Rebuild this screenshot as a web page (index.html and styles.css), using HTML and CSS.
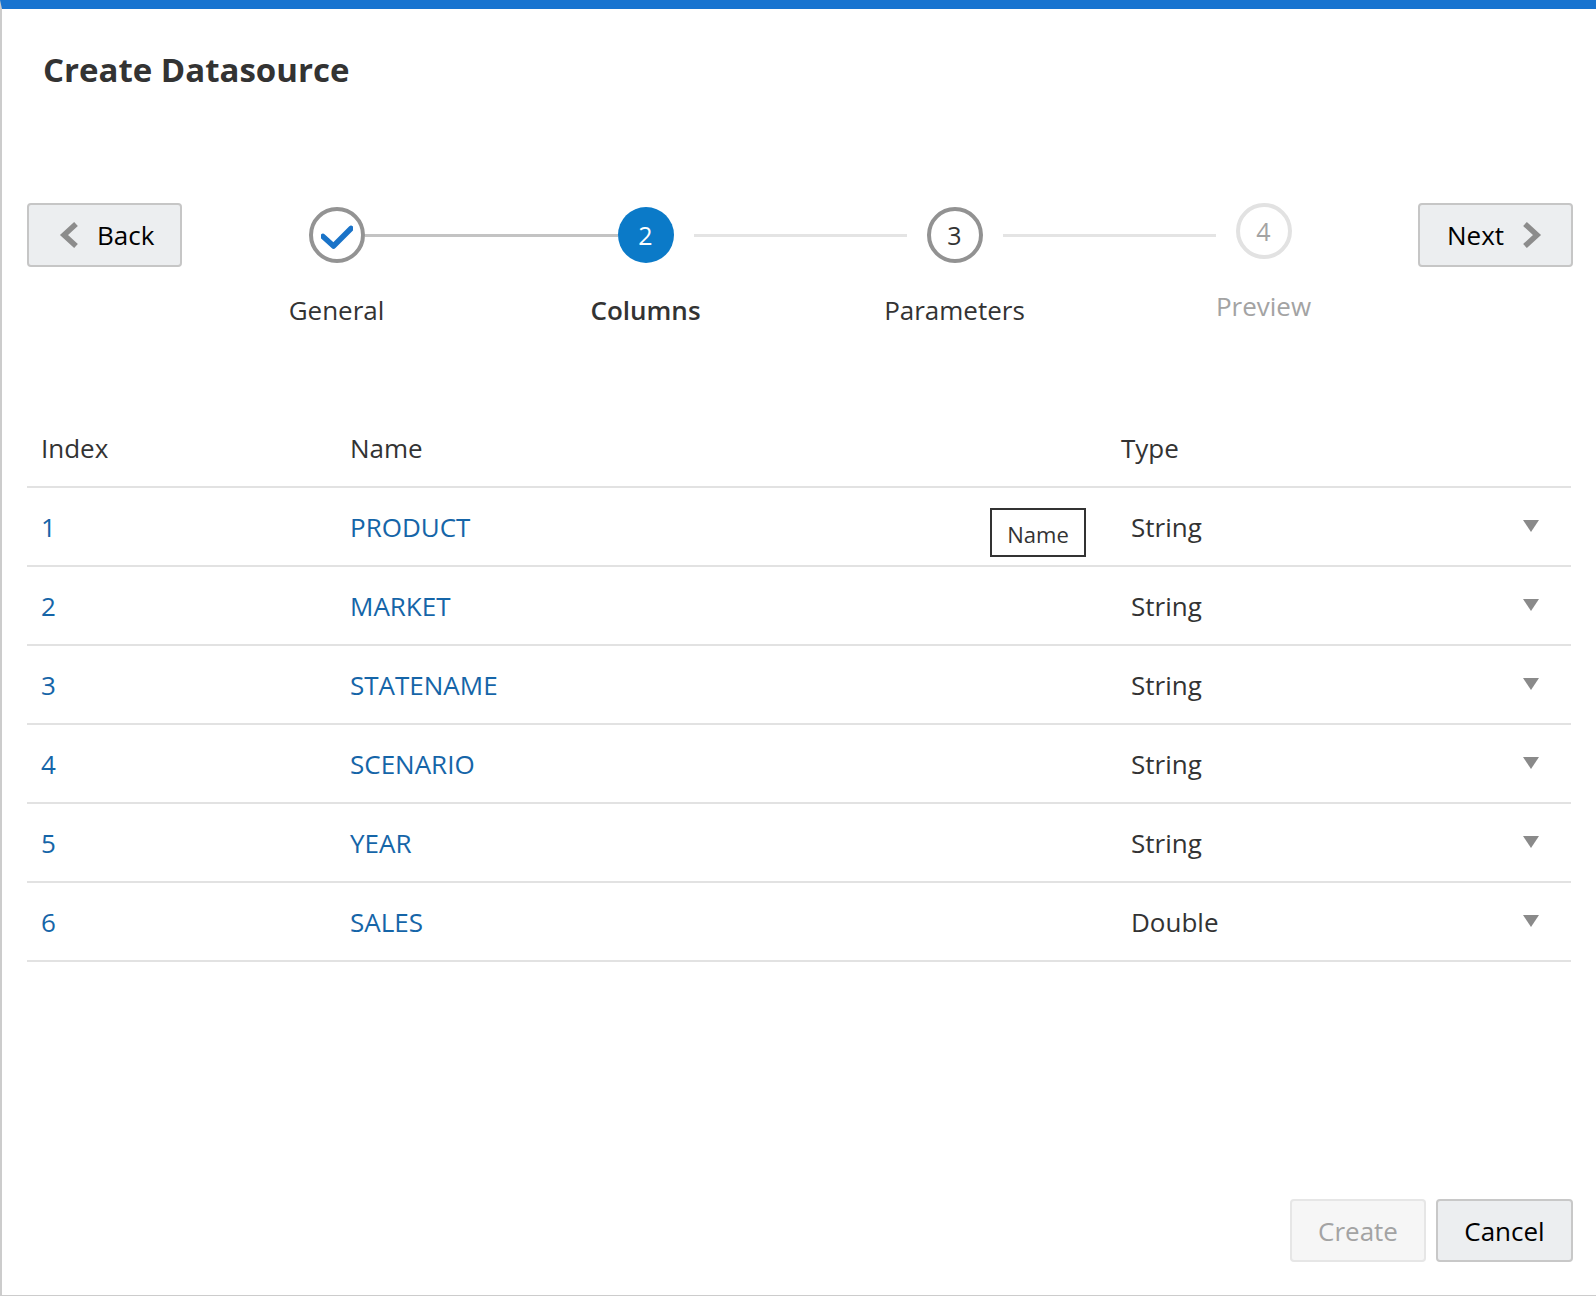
FILE: index.html
```html
<!DOCTYPE html>
<html lang="en">
<head>
<meta charset="utf-8">
<title>Create Datasource</title>
<link rel="stylesheet" href="styles.css">
</head>
<body>
<div class="dialog">
  <h1 class="title">Create Datasource</h1>

  <div class="train-row">
    <button class="nav-btn back-btn" type="button">
      <svg class="chev" width="20" height="28" viewBox="0 0 20 28"><polyline points="17,3 5,14 17,25" /></svg>
      <span>Back</span>
    </button>

    <div class="steps">
      <div class="step">
        <div class="step-track">
          <span class="seg none"></span>
          <span class="circle done">
            <svg class="check" width="32" height="24" viewBox="0 0 32 24"><polyline points="2,11.5 12.5,21 30,3.5" /></svg>
          </span>
          <span class="seg done-line"></span>
        </div>
        <div class="label">General</div>
      </div>
      <div class="step">
        <div class="step-track">
          <span class="seg done-line"></span>
          <span class="circle current">2</span>
          <span class="seg todo right"></span>
        </div>
        <div class="label current-label">Columns</div>
      </div>
      <div class="step">
        <div class="step-track">
          <span class="seg todo left"></span>
          <span class="circle open">3</span>
          <span class="seg todo right"></span>
        </div>
        <div class="label">Parameters</div>
      </div>
      <div class="step">
        <div class="step-track">
          <span class="seg todo left"></span>
          <span class="circle disabled raised">4</span>
          <span class="seg none"></span>
        </div>
        <div class="label disabled-label raised">Preview</div>
      </div>
    </div>

    <button class="nav-btn next-btn" type="button">
      <span>Next</span>
      <svg class="chev" width="20" height="28" viewBox="0 0 20 28"><polyline points="3,3 15,14 3,25" /></svg>
    </button>
  </div>

  <div class="table">
    <div class="thead">
      <div class="cell c-index">Index</div>
      <div class="cell c-name">Name</div>
      <div class="cell c-type">Type</div>
    </div>

    <div class="trow">
      <div class="cell c-index link">1</div>
      <div class="cell c-name link">PRODUCT<span class="tooltip">Name</span></div>
      <div class="cell c-type"><span class="select"><span>String</span><span class="arrow"></span></span></div>
    </div>
    <div class="trow">
      <div class="cell c-index link">2</div>
      <div class="cell c-name link">MARKET</div>
      <div class="cell c-type"><span class="select"><span>String</span><span class="arrow"></span></span></div>
    </div>
    <div class="trow">
      <div class="cell c-index link">3</div>
      <div class="cell c-name link">STATENAME</div>
      <div class="cell c-type"><span class="select"><span>String</span><span class="arrow"></span></span></div>
    </div>
    <div class="trow">
      <div class="cell c-index link">4</div>
      <div class="cell c-name link">SCENARIO</div>
      <div class="cell c-type"><span class="select"><span>String</span><span class="arrow"></span></span></div>
    </div>
    <div class="trow">
      <div class="cell c-index link">5</div>
      <div class="cell c-name link">YEAR</div>
      <div class="cell c-type"><span class="select"><span>String</span><span class="arrow"></span></span></div>
    </div>
    <div class="trow">
      <div class="cell c-index link">6</div>
      <div class="cell c-name link">SALES</div>
      <div class="cell c-type"><span class="select"><span>Double</span><span class="arrow"></span></span></div>
    </div>
  </div>

  <div class="footer">
    <button class="foot-btn create" type="button" disabled>Create</button>
    <button class="foot-btn cancel" type="button">Cancel</button>
  </div>
</div>
</body>
</html>
```

FILE: styles.css
```css
* {
  box-sizing: border-box;
}

html, body {
  margin: 0;
  padding: 0;
  background: #ffffff;
}

body {
  font-family: "Open Sans", "Noto Sans", "Liberation Sans", sans-serif;
  color: #333333;
}

.dialog {
  height: 1296px;
  width: 1596px;
  border-top: 9px solid #1874d0;
  border-left: 2px solid #cccccc;
  border-bottom: 1px solid #cccccc;
  display: flex;
  flex-direction: column;
  background: #ffffff;
}

.title {
  margin: 41px 0 0 0;
  padding-left: 41px;
  font-size: 33px;
  line-height: 40px;
  font-weight: 700;
  color: #333333;
}

/* ---------- train ---------- */
.train-row {
  margin-top: 113px;
  padding-left: 25px;
  display: flex;
  align-items: flex-start;
}

.nav-btn {
  width: 155px;
  height: 64px;
  border: 2px solid #c6c6c6;
  border-radius: 4px;
  background: #eceef0;
  display: flex;
  align-items: center;
  font-family: inherit;
  font-size: 26px;
  color: #000000;
  padding: 0;
  cursor: pointer;
}

.back-btn {
  padding-left: 30px;
  gap: 18px;
}

.next-btn {
  padding-left: 27px;
  gap: 18px;
}

.nav-btn span {
  line-height: 36px;
}

.chev {
  display: block;
  flex: none;
}

.chev polyline {
  fill: none;
  stroke: #8c8c8c;
  stroke-width: 5.5;
  stroke-linejoin: miter;
}

.steps {
  display: flex;
}

.step {
  width: 309px;
  padding-top: 4px;
  display: flex;
  flex-direction: column;
  align-items: center;
}

.step-track {
  width: 100%;
  display: flex;
  align-items: center;
}

.seg {
  flex: 1 1 0;
  display: flex;
  min-width: 0;
}

.seg::before {
  content: "";
  flex: 1;
  height: 3px;
}

.seg.none::before {
  background: transparent;
}

.seg.done-line::before {
  background: #c3c3c3;
}

.seg.todo::before {
  background: #e4e4e4;
}

.seg.todo.right::before {
  margin-left: 20px;
}

.seg.todo.left::before {
  margin-right: 20px;
}

.circle {
  flex: none;
  width: 56px;
  height: 56px;
  border-radius: 50%;
  display: flex;
  align-items: center;
  justify-content: center;
  font-size: 25px;
  line-height: 1;
}

.circle.done {
  border: 4px solid #939393;
  background: #ffffff;
}

.check {
  display: block;
  margin-top: 4px;
}

.check polyline {
  fill: none;
  stroke: #1a73c8;
  stroke-width: 5.5;
  stroke-linecap: round;
  stroke-linejoin: round;
}

.circle.current {
  background: #0b7ac8;
  color: #ffffff;
}

.circle.open {
  border: 4px solid #929292;
  color: #333333;
}

.circle.disabled {
  border: 4px solid #e2e2e2;
  color: #a3a3a3;
}

.raised {
  transform: translateY(-4px);
}

.label {
  margin-top: 29px;
  font-size: 26px;
  line-height: 36px;
  color: #333333;
  white-space: nowrap;
}

.label.current-label {
  font-weight: 600;
}

.label.disabled-label {
  color: #a3a3a3;
}

/* ---------- table ---------- */
.table {
  margin-top: 102px;
  margin-left: 25px;
  width: 1544px;
}

.thead,
.trow {
  display: grid;
  grid-template-columns: 323px 771px 450px;
  border-bottom: 2px solid #e2e2e2;
}

.thead .cell {
  font-size: 26px;
  line-height: 36px;
  padding-bottom: 20px;
  color: #333333;
}

.trow {
  height: 79px;
  align-items: center;
}

.trow .cell {
  font-size: 26px;
  line-height: 36px;
}

.c-index {
  padding-left: 14px;
}

.c-name {
  position: relative;
  height: 100%;
  display: flex;
  align-items: center;
}

.thead .c-name {
  display: block;
}

.link {
  color: #1565a8;
}

.select {
  display: flex;
  align-items: center;
  justify-content: space-between;
  padding-left: 10px;
  padding-right: 32px;
  color: #333333;
}

.arrow {
  width: 0;
  height: 0;
  border-left: 8.5px solid transparent;
  border-right: 8.5px solid transparent;
  border-top: 12px solid #8a8a8a;
  margin-top: -2px;
}

.tooltip {
  position: absolute;
  right: 35px;
  top: 20px;
  width: 96px;
  height: 49px;
  border: 2px solid #333333;
  background: #ffffff;
  color: #333333;
  font-size: 22px;
  line-height: 30px;
  display: flex;
  align-items: center;
  justify-content: center;
  padding-top: 3px;
}

/* ---------- footer ---------- */
.footer {
  margin-top: auto;
  padding: 0 23px 33px 0;
  display: flex;
  justify-content: flex-end;
  gap: 10px;
}

.foot-btn {
  height: 63px;
  border-radius: 4px;
  font-family: inherit;
  font-size: 26px;
  padding: 0;
}

.foot-btn.create {
  width: 136px;
  border: 2px solid #e6e6e6;
  background: #f6f6f6;
  color: #a3a3a3;
}

.foot-btn.cancel {
  width: 137px;
  border: 2px solid #c8c8c8;
  background: #eceef0;
  color: #000000;
  cursor: pointer;
}
```
